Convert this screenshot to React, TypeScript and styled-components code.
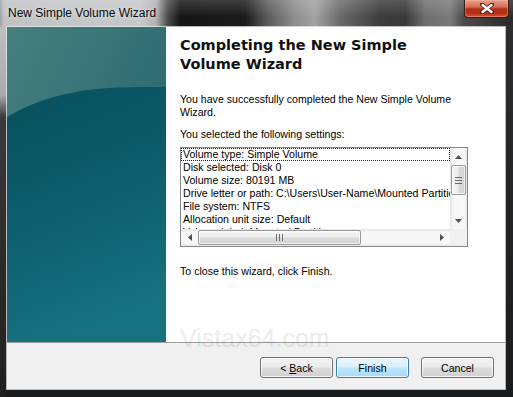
import React from "react";
import styled, { createGlobalStyle, css } from "styled-components";

const GlobalStyle = createGlobalStyle`
  html, body { margin: 0; padding: 0; background: #ffffff; }
  body { font-family: "Liberation Sans", Arial, sans-serif; }
  * { box-sizing: border-box; }
`;

const Window = styled.div`
  width: 513px;
  height: 397px;
  display: flex;
  flex-direction: column;
  background: #1c1d1e;
  position: relative;
  overflow: hidden;
  box-shadow: inset 0 -1px 0 #2f6a80, inset -1px 0 0 #2f6a80;
`;

const TitleBar = styled.div`
  height: 27px;
  flex: none;
  display: flex;
  align-items: flex-start;
  justify-content: space-between;
  background:
    linear-gradient(to bottom, rgba(255, 255, 255, 0.16), rgba(255, 255, 255, 0) 65%),
    linear-gradient(
      to right,
      #9ea1a3 0px,
      #c1c3c5 4px,
      #c6c8ca 140px,
      #b0b2b4 156px,
      #4a4a4a 168px,
      #161616 180px,
      #1a1a1a 245px,
      #5c5c5c 268px,
      #8e8e8e 295px,
      #a2a2a2 315px,
      #6a6a6a 340px,
      #3c3c3c 380px,
      #383838 405px,
      #6e6e6e 425px,
      #7a7a7a 450px,
      #4a4a4a 464px,
      #2a2a2a 513px
    );
`;

const TitleText = styled.div`
  margin: 6px 0 0 8px;
  font-family: "Liberation Sans", Arial, sans-serif;
  font-size: 12px;
  line-height: 14px;
  color: #0b0b0b;
  text-shadow: 0 0 5px rgba(255, 255, 255, 0.7);
  white-space: nowrap;
`;

const CloseButton = styled.div`
  width: 45px;
  height: 18px;
  margin-right: 4px;
  border: 1px solid #3b1810;
  border-top: none;
  border-radius: 0 0 4px 4px;
  background: linear-gradient(
    to bottom,
    #e8a08c 0%,
    #d6705a 40%,
    #b8301a 52%,
    #b22c16 75%,
    #d65434 100%
  );
  box-shadow: inset 0 0 0 1px rgba(255, 200, 180, 0.35);
  display: flex;
  align-items: center;
  justify-content: center;
`;

const FrameBody = styled.div`
  flex: 1;
  display: flex;
  padding: 0 8px 8px 7px;
  background:
    linear-gradient(to bottom, #bdbfc1 0px, #a8aaac 68px, #3a3a3a 90px, #1e1e1e 100%) left top / 7px 100% no-repeat,
    linear-gradient(to bottom, #2c2d2e, #1a1b1c);
`;

const Client = styled.div`
  width: 498px;
  height: 362px;
  display: flex;
  flex-direction: column;
  position: relative;
  box-shadow: 0 0 0 1px rgba(235, 235, 235, 0.75);
`;

const Main = styled.div`
  height: 315px;
  display: flex;
`;

const SidePanel = styled.div`
  width: 159px;
  flex: none;
  svg {
    display: block;
    width: 100%;
    height: 100%;
  }
`;

const Content = styled.div`
  flex: 1;
  background: #ffffff;
  padding: 9px 0 0 14px;
  color: #000;
`;

const Heading = styled.h1`
  margin: 0;
  max-width: 270px;
  font-family: "DejaVu Sans", Verdana, sans-serif;
  font-weight: bold;
  font-size: 14.5px;
  line-height: 18.5px;
  color: #111;
`;

const Text = styled.p<{ $gap: number }>`
  margin: ${(p) => p.$gap}px 0 0 0;
  max-width: 290px;
  font-family: "Liberation Sans", Arial, sans-serif;
  font-size: 10.6px;
  line-height: 13px;
  color: #000;
`;

const ListBox = styled.div`
  margin-top: 6px;
  width: 288px;
  height: 100px;
  border: 1px solid #828790;
  background: #fff;
  display: grid;
  grid-template-columns: 1fr 17px;
  grid-template-rows: 1fr 17px;
`;

const Items = styled.div`
  overflow: hidden;
  font-family: "Liberation Sans", Arial, sans-serif;
  font-size: 10.6px;
  line-height: 13px;
  color: #000;
`;

const Item = styled.div<{ $focused?: boolean }>`
  height: 13px;
  padding-left: 2px;
  white-space: nowrap;
  ${(p) =>
    p.$focused &&
    css`
      outline: 1px dotted #222;
      outline-offset: -1px;
    `}
`;

const VScroll = styled.div`
  display: flex;
  flex-direction: column;
  background: linear-gradient(to right, #e4e4e4, #f6f6f6 18%, #f8f8f8 82%, #e8e8e8);
`;

const HScroll = styled.div`
  display: flex;
  background: linear-gradient(to bottom, #e4e4e4, #f6f6f6 18%, #f8f8f8 82%, #e8e8e8);
`;

const ArrowButton = styled.div`
  width: 17px;
  height: 17px;
  flex: none;
  display: flex;
  align-items: center;
  justify-content: center;
`;

const Track = styled.div`
  flex: 1;
`;

const VThumb = styled.div`
  height: 30px;
  margin: 0 1px;
  flex: none;
  border: 1px solid #9a9a9a;
  border-radius: 2px;
  background: linear-gradient(to right, #f6f6f6, #ececec 48%, #dcdcdc 52%, #d2d2d2);
  box-shadow: inset 0 0 0 1px rgba(255, 255, 255, 0.7);
  display: flex;
  align-items: center;
  justify-content: center;
`;

const HThumb = styled.div`
  width: 163px;
  margin: 1px 0;
  flex: none;
  border: 1px solid #9a9a9a;
  border-radius: 2px;
  background: linear-gradient(to bottom, #f6f6f6, #ececec 48%, #dcdcdc 52%, #d2d2d2);
  box-shadow: inset 0 0 0 1px rgba(255, 255, 255, 0.7);
  display: flex;
  align-items: center;
  justify-content: center;
`;

const Corner = styled.div`
  background: #f0f0f0;
`;

const ButtonBar = styled.div`
  height: 47px;
  flex: none;
  display: flex;
  justify-content: flex-end;
  align-items: flex-start;
  gap: 3px;
  padding: 14px 11px 0 0;
  border-top: 1px solid #a0a0a0;
  background: #f0f0f0;
`;

const Button = styled.button<{ $primary?: boolean; $apart?: boolean }>`
  width: 73px;
  height: 21px;
  padding: 0;
  margin-left: ${(p) => (p.$apart ? "9px" : "0")};
  font-family: "Liberation Sans", Arial, sans-serif;
  font-size: 10.6px;
  color: #000;
  border: 1px solid #707070;
  border-radius: 3px;
  background: linear-gradient(to bottom, #f3f3f3 0%, #ebebeb 48%, #dddddd 52%, #cfcfcf 100%);
  box-shadow: inset 0 0 0 1px rgba(255, 255, 255, 0.75);
  ${(p) =>
    p.$primary &&
    css`
      border-color: #3c7fb1;
      background: linear-gradient(to bottom, #eaf6fd 0%, #d9f0fc 48%, #bee6fd 52%, #a7d9f5 100%);
    `}
`;

const Watermark = styled.div`
  position: absolute;
  left: 173px;
  top: 299px;
  font-family: "Liberation Sans", Arial, sans-serif;
  font-size: 25px;
  line-height: 25px;
  color: rgba(0, 0, 0, 0.085);
  -webkit-text-stroke: 0.7px rgba(0, 0, 0, 0.06);
  pointer-events: none;
  white-space: nowrap;
`;

const Arrow = ({ dir }: { dir: "up" | "down" | "left" | "right" }) => {
  const pts = {
    up: "0,4 3.5,0 7,4",
    down: "0,0 7,0 3.5,4",
    left: "4,0 4,7 0,3.5",
    right: "0,0 4,3.5 0,7",
  }[dir];
  const vertical = dir === "up" || dir === "down";
  return (
    <svg width={vertical ? 7 : 4} height={vertical ? 4 : 7} viewBox={vertical ? "0 0 7 4" : "0 0 4 7"}>
      <polygon points={pts} fill="#505050" />
    </svg>
  );
};

const items = [
  "Volume type: Simple Volume",
  "Disk selected: Disk 0",
  "Volume size: 80191 MB",
  "Drive letter or path: C:\\Users\\User-Name\\Mounted Partition",
  "File system: NTFS",
  "Allocation unit size: Default",
  "Volume label: Mounted Partition",
  "Quick format: Yes",
];

export default function App() {
  return (
    <>
      <GlobalStyle />
      <Window>
        <TitleBar>
          <TitleText>New Simple Volume Wizard</TitleText>
          <CloseButton>
            <svg width="14" height="11" viewBox="0 0 14 11">
              <path d="M2 1.5 L12 9.5 M12 1.5 L2 9.5" stroke="#5a1a10" strokeWidth="4" strokeLinecap="round" />
              <path d="M2.5 2 L11.5 9 M11.5 2 L2.5 9" stroke="#ffffff" strokeWidth="2.4" strokeLinecap="round" />
            </svg>
          </CloseButton>
        </TitleBar>
        <FrameBody>
          <Client>
            <Main>
              <SidePanel>
                <svg viewBox="0 0 159 315" preserveAspectRatio="none">
                  <defs>
                    <linearGradient id="upper" x1="0" y1="0" x2="1" y2="1">
                      <stop offset="0" stopColor="#46807f" />
                      <stop offset="1" stopColor="#1f5f67" />
                    </linearGradient>
                    <linearGradient id="lower" x1="0" y1="0" x2="0.25" y2="1">
                      <stop offset="0" stopColor="#08505d" />
                      <stop offset="0.5" stopColor="#0d5d6c" />
                      <stop offset="1" stopColor="#16717f" />
                    </linearGradient>
                  </defs>
                  <rect x="0" y="0" width="159" height="315" fill="url(#upper)" />
                  <path d="M0 90 C30 72 70 60 130 60 L159 60 L159 315 L0 315 Z" fill="url(#lower)" />
                </svg>
              </SidePanel>
              <Content>
                <Heading>Completing the New Simple Volume Wizard</Heading>
                <Text $gap={20}>You have successfully completed the New Simple Volume Wizard.</Text>
                <Text $gap={9}>You selected the following settings:</Text>
                <ListBox>
                  <Items>
                    {items.map((t, i) => (
                      <Item key={t} $focused={i === 0}>
                        {t}
                      </Item>
                    ))}
                  </Items>
                  <VScroll>
                    <ArrowButton>
                      <Arrow dir="up" />
                    </ArrowButton>
                    <VThumb>
                      <svg width="7" height="7" viewBox="0 0 7 7">
                        <path d="M0 0.5 H7 M0 3.5 H7 M0 6.5 H7" stroke="#6a6a6a" strokeWidth="1" />
                      </svg>
                    </VThumb>
                    <Track />
                    <ArrowButton>
                      <Arrow dir="down" />
                    </ArrowButton>
                  </VScroll>
                  <HScroll>
                    <ArrowButton>
                      <Arrow dir="left" />
                    </ArrowButton>
                    <HThumb>
                      <svg width="7" height="7" viewBox="0 0 7 7">
                        <path d="M0.5 0 V7 M3.5 0 V7 M6.5 0 V7" stroke="#6a6a6a" strokeWidth="1" />
                      </svg>
                    </HThumb>
                    <Track />
                    <ArrowButton>
                      <Arrow dir="right" />
                    </ArrowButton>
                  </HScroll>
                  <Corner />
                </ListBox>
                <Text $gap={18}>To close this wizard, click Finish.</Text>
              </Content>
            </Main>
            <ButtonBar>
              <Button>
                &lt; <u>B</u>ack
              </Button>
              <Button $primary>Finish</Button>
              <Button $apart>Cancel</Button>
            </ButtonBar>
            <Watermark>Vistax64.com</Watermark>
          </Client>
        </FrameBody>
      </Window>
    </>
  );
}
